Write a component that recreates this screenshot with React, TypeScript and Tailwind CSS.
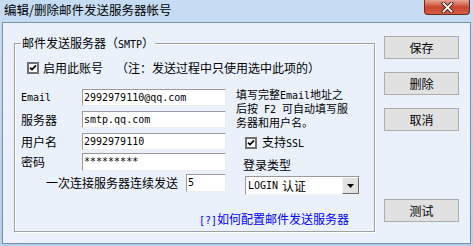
import React from 'react';

const mono = "font-['DejaVu_Sans_Mono',monospace] text-[10px]";

function CheckBox() {
  return (
    <span className="flex h-[12px] w-[12px] shrink-0 items-center justify-center border-2 border-[#6f6f6f] bg-white">
      <svg width="8" height="8" viewBox="0 0 8 8">
        <path d="M1 3.6 L3 5.6 L7 1.4" stroke="#000" strokeWidth="1.7" fill="none" />
      </svg>
    </span>
  );
}

function Field({ value, className }: { value: string; className: string }) {
  return (
    <div
      className={`${className} border-t border-l border-[#9a9a9a] border-r-[#ececec] border-b-[#ececec] border-r border-b bg-white pl-[1px] pt-[2px] leading-[12px] ${mono}`}
    >
      {value}
    </div>
  );
}

function DialogButton({ label, className = '' }: { label: string; className?: string }) {
  return (
    <button
      type="button"
      className={`flex h-[23px] w-[75px] items-center justify-center border border-[#adadad] bg-[#e1e1e1] leading-[12px] ${className}`}
    >
      {label}
    </button>
  );
}

function CloseButton() {
  return (
    <div className="mr-[3px] flex h-[15px] w-[46px] items-center justify-center rounded-b-[4px] border border-t-0 border-[#6a2b22] bg-linear-to-b from-[#e7a497] via-[#c9472f] to-[#d65d40]">
      <svg width="13" height="11" viewBox="0 0 13 11">
        <path d="M2.5 1.5 L10.5 9.5 M10.5 1.5 L2.5 9.5" stroke="#3e1d18" strokeWidth="3.6" strokeLinecap="square" fill="none" />
        <path d="M2.5 1.5 L10.5 9.5 M10.5 1.5 L2.5 9.5" stroke="#fff" strokeWidth="1.8" strokeLinecap="square" fill="none" />
      </svg>
    </div>
  );
}

export default function App() {
  return (
    <div className="flex h-[246px] w-[473px] flex-col overflow-hidden bg-linear-to-b from-[#c6dcf2] to-[#b6cee8] font-['Noto_Sans_CJK_SC',sans-serif] text-[12px] leading-[12px] text-black">
      {/* title bar */}
      <div className="flex h-[22px] shrink-0 items-start justify-between">
        <span className="pl-[4px] pt-[4px] text-[12.5px]">编辑/删除邮件发送服务器帐号</span>
        <CloseButton />
      </div>

      {/* dialog body */}
      <div className="mx-[2px] flex h-[222px] border border-[#7b8fa9] bg-[#eaf1fa] pl-[11px] pt-[13px]">
        <div className="relative mt-[7px] h-[189px] w-[361px] border border-[#a0a0a0] shadow-[1px_1px_0_#fff,inset_1px_1px_0_#fff]">
          <span className="absolute left-[6px] top-[-7px] bg-[#eaf1fa] px-[1px]">
            邮件发送服务器（<span className={mono}>SMTP</span>）
          </span>

          <div className="mt-[18px] flex h-[12px] items-center pl-[12px]">
            <CheckBox />
            <span className="ml-[4px]">启用此账号</span>
            <span className="ml-[13px]">（注：发送过程中只使用选中此项的）</span>
          </div>

          <div className="mt-[15px] flex">
            <div className="flex w-[211px] flex-col">
              <div className="flex h-[17px] items-center">
                <span className={`w-[67px] pl-[6px] ${mono}`}>Email</span>
                <Field value="2992979110@qq.com" className="h-[17px] w-[144px]" />
              </div>
              <div className="mt-[5px] flex h-[17px] items-center">
                <span className="w-[67px] pl-[6px]">服务器</span>
                <Field value="smtp.qq.com" className="h-[17px] w-[144px]" />
              </div>
              <div className="mt-[5px] flex h-[17px] items-center">
                <span className="w-[67px] pl-[6px]">用户名</span>
                <Field value="2992979110" className="h-[17px] w-[144px]" />
              </div>
              <div className="mt-[3px] flex h-[18px] items-center">
                <span className="w-[67px] pl-[6px]">密码</span>
                <Field value="*********" className="h-[18px] w-[144px]" />
              </div>
              <div className="mt-[3px] flex h-[18px] items-center justify-end">
                <span>一次连接服务器连续发送</span>
                <Field value="5" className="ml-[8px] h-[18px] w-[40px]" />
              </div>
            </div>

            <div className="ml-[10px] flex flex-col">
              <p className="-mt-[1px] text-[11px] leading-[12px]">
                填写完整<span className={mono}>Email</span>地址之
                <br />
                后按<span className={mono}> F2 </span>可自动填写服
                <br />
                务器和用户名。
              </p>
              <div className="mt-[9px] flex h-[12px] items-center pl-[9px]">
                <CheckBox />
                <span className="ml-[5px]">
                  支持<span className={mono}>SSL</span>
                </span>
              </div>
              <div className="mt-[10px] h-[12px] pl-[7px]">登录类型</div>
              <div className="ml-[9px] mt-[5px] flex h-[19px] w-[115px] border-t border-l border-r border-b border-[#9a9a9a] border-r-[#f4f4f4] border-b-[#f4f4f4] bg-white">
                <span className="flex flex-1 items-center pl-[2px]">
                  <span className={mono}>LOGIN</span>
                  <span className="ml-[4px]">认证</span>
                </span>
                <span className="flex w-[17px] items-center justify-center border border-[#f8f8f8] border-r-[#696969] border-b-[#696969] bg-[#e1e1e1]">
                  <svg width="7" height="4" viewBox="0 0 7 4">
                    <path d="M0 0 L7 0 L3.5 4 Z" fill="#000" />
                  </svg>
                </span>
              </div>
            </div>
          </div>

          <div className="mt-[18px] h-[12px] pl-[184px] text-[#0000ff]">
            <span className={mono}>[?]</span>如何配置邮件发送服务器
          </div>
        </div>

        <div className="ml-[9px] flex flex-col">
          <DialogButton label="保存" />
          <DialogButton label="删除" className="mt-[13px]" />
          <DialogButton label="取消" className="mt-[13px]" />
          <DialogButton label="测试" className="mt-[68px]" />
        </div>
      </div>
    </div>
  );
}
